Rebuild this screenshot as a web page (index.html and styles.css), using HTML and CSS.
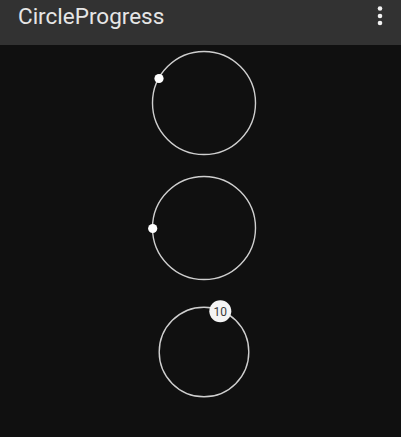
FILE: index.html
```html
<!DOCTYPE html>
<html>
<head>
<meta charset="utf-8">
<link rel="stylesheet" href="styles.css">
</head>
<body>
<header class="appbar">
  <span class="title">CircleProgress</span>
  <svg class="overflow" width="8" height="26" viewBox="0 0 8 26">
    <circle cx="4" cy="7.5" r="2.3" fill="#f2f2f2"/>
    <circle cx="4" cy="15" r="2.3" fill="#f2f2f2"/>
    <circle cx="4" cy="22" r="2.3" fill="#f2f2f2"/>
  </svg>
</header>
<main class="content">
  <svg class="progress" width="401" height="116" viewBox="0 0 401 116">
    <circle cx="204" cy="58" r="51.5" fill="none" stroke="#cfcfcf" stroke-width="1.4"/>
    <circle cx="159" cy="33.5" r="4.6" fill="#ffffff"/>
  </svg>
  <svg class="progress" width="401" height="116" viewBox="0 0 401 116">
    <circle cx="204" cy="58" r="51.5" fill="none" stroke="#cfcfcf" stroke-width="1.4"/>
    <circle cx="152.7" cy="58.5" r="4.6" fill="#ffffff"/>
  </svg>
  <svg class="progress" width="401" height="116" viewBox="0 0 401 116">
    <circle cx="204" cy="58" r="44.8" fill="none" stroke="#cfcfcf" stroke-width="1.4"/>
    <circle cx="220.3" cy="17.3" r="11" fill="#f4f4f4"/>
    <text x="220.3" y="21.5" text-anchor="middle" class="badge-text">10</text>
  </svg>
</main>
</body>
</html>
```
FILE: styles.css
```css
html, body {
  margin: 0;
  padding: 0;
}
body {
  width: 401px;
  height: 437px;
  background: #101010;
  font-family: Roboto, "Noto Sans", sans-serif;
  overflow: hidden;
}
.appbar {
  height: 45px;
  background: #323232;
  display: flex;
  align-items: flex-start;
  justify-content: space-between;
  padding: 0 17px 0 18px;
  box-sizing: border-box;
}
.title {
  color: #e6e6e6;
  font-size: 22.5px;
  line-height: 32px;
  margin-top: 0px;
  letter-spacing: 0;
}
.overflow {
  display: block;
  margin-top: 1px;
}
.content {
  display: flex;
  flex-direction: column;
  gap: 8.5px;
}
.progress {
  display: block;
}
.badge-text {
  font-family: Roboto, "Noto Sans", sans-serif;
  font-size: 12px;
  fill: #3a3a3a;
}
```
